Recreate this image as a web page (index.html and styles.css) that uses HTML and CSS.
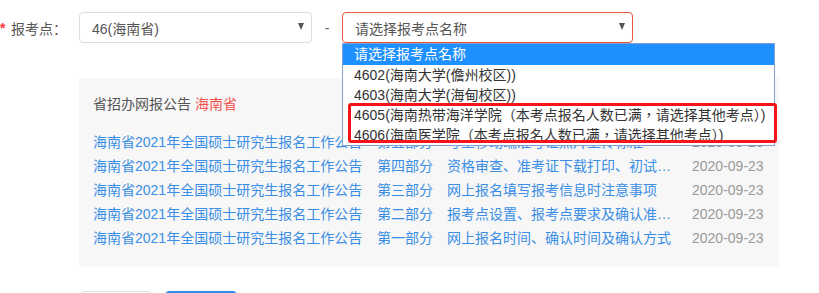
FILE: index.html
```html
<!DOCTYPE html>
<html>
    <head>
        <meta charset="utf-8">
        <link rel="stylesheet" href="styles.css">
    </head>
    <body>
        <div class="form-row">
            <label class="label"><span class="star">*</span>报考点：</label>
            <div class="select province">
                <span>46(海南省)</span>
                <i class="arrow"></i>
            </div>
            <span class="dash">-</span>
            <div class="select-wrap">
                <div class="select site">
                    <span>请选择报考点名称</span>
                    <i class="arrow"></i>
                </div>
                <ul class="options" lang="zh-TW">
                    <li class="active">请选择报考点名称</li>
                    <li>4602(海南大学(儋州校区))</li>
                    <li>4603(海南大学(海甸校区))</li>
                    <li>4605(海南热带海洋学院（本考点报名人数已满，请选择其他考点）)</li>
                    <li>4606(海南医学院（本考点报名人数已满，请选择其他考点）)</li>
                </ul>
                <div class="mark"></div>
            </div>
        </div>

        <div class="notice">
            <div class="notice-title">省招办网报公告 <span class="prov">海南省</span></div>
            <ul class="notice-list">
                <li><a class="c1">海南省2021年全国硕士研究生报名工作公告</a><a class="c2">第五部分</a><a class="c3">考生移动端准考证照片上传标准</a><span class="date">2020-09-23</span></li>
                <li><a class="c1">海南省2021年全国硕士研究生报名工作公告</a><a class="c2">第四部分</a><a class="c3">资格审查、准考证下载打印、初试审查及其他事项</a><span class="date">2020-09-23</span></li>
                <li><a class="c1">海南省2021年全国硕士研究生报名工作公告</a><a class="c2">第三部分</a><a class="c3">网上报名填写报考信息时注意事项</a><span class="date">2020-09-23</span></li>
                <li><a class="c1">海南省2021年全国硕士研究生报名工作公告</a><a class="c2">第二部分</a><a class="c3">报考点设置、报考点要求及确认准考证信息</a><span class="date">2020-09-23</span></li>
                <li><a class="c1">海南省2021年全国硕士研究生报名工作公告</a><a class="c2">第一部分</a><a class="c3">网上报名时间、确认时间及确认方式</a><span class="date">2020-09-23</span></li>
            </ul>
        </div>

        <div class="buttons">
            <button class="btn">上一步</button>
            <button class="btn primary">下一步</button>
        </div>
    </body>
</html>
```

FILE: styles.css
```css
body{
    margin:0px;
    background:#fff;
    font-family:"Liberation Sans","Noto Sans CJK SC",sans-serif;
    font-size:14px;
    color:#555;
}
ul{
    list-style:none;
    margin:0;
    padding:0;
}
.form-row{
    display:flex;
    align-items:center;
    margin-top:12px;
    height:31px;
}
.label{
    width:79px;
    display:flex;
    align-items:center;
    color:#555;
}
.star{
    color:#f33;
    width:11px;
    font-weight:bold;
}
.select{
    box-sizing:border-box;
    height:31px;
    border:1px solid #ddd;
    border-radius:4px;
    display:flex;
    align-items:center;
    justify-content:space-between;
    padding:0 7px 0 12px;
    background:#fff;
    color:#555;
}
.province{
    width:233px;
}
.site{
    width:291px;
    border-color:#e8553c;
}
.arrow{
    width:0;
    height:0;
    border-left:3.5px solid transparent;
    border-right:3.5px solid transparent;
    border-top:7px solid #555;
    margin-top:-2px;
}
.dash{
    width:30px;
    text-align:center;
    color:#666;
}
.select-wrap{
    position:relative;
}
.options{
    position:absolute;
    left:0;
    top:31px;
    width:433px;
    box-sizing:border-box;
    border:1px solid #7ea0d6;
    background:#fff;
    z-index:2;
    font-family:"Liberation Sans","Noto Sans CJK TC",sans-serif;
}
.options li{
    height:20px;
    line-height:20px;
    padding-left:11px;
    color:#333;
    white-space:nowrap;
}
.options li.active{
    height:21px;
    line-height:21px;
    background:#1e90ff;
    color:#fff;
}
.mark{
    position:absolute;
    left:6px;
    top:91px;
    width:429px;
    height:40px;
    box-sizing:border-box;
    border:3px solid #f5141a;
    border-radius:3px;
    z-index:3;
}
.notice{
    margin:35px 0 0 79px;
    width:700px;
    box-sizing:border-box;
    background:#f7f7f7;
    padding:14px 14px 17px;
}
.notice-title{
    line-height:24px;
    color:#555;
    margin-bottom:14px;
}
.prov{
    color:#f55050;
}
.notice-list li{
    display:flex;
    line-height:24px;
    white-space:nowrap;
}
.notice-list a{
    color:#3a8ee6;
    overflow:hidden;
    text-overflow:ellipsis;
}
.c1{
    width:270px;
    margin-right:14px;
}
.c2{
    width:56px;
    margin-right:14px;
}
.c3{
    width:225px;
    margin-right:20px;
}
.date{
    color:#999;
}
.buttons{
    display:flex;
    gap:13px;
    margin:24px 0 0 80px;
}
.btn{
    width:72px;
    height:32px;
    border:1px solid #ddd;
    border-radius:4px;
    background:#fff;
    color:#555;
    font-family:inherit;
    font-size:14px;
}
.btn.primary{
    background:#2d8cf0;
    border-color:#2d8cf0;
    color:#fff;
}
```
